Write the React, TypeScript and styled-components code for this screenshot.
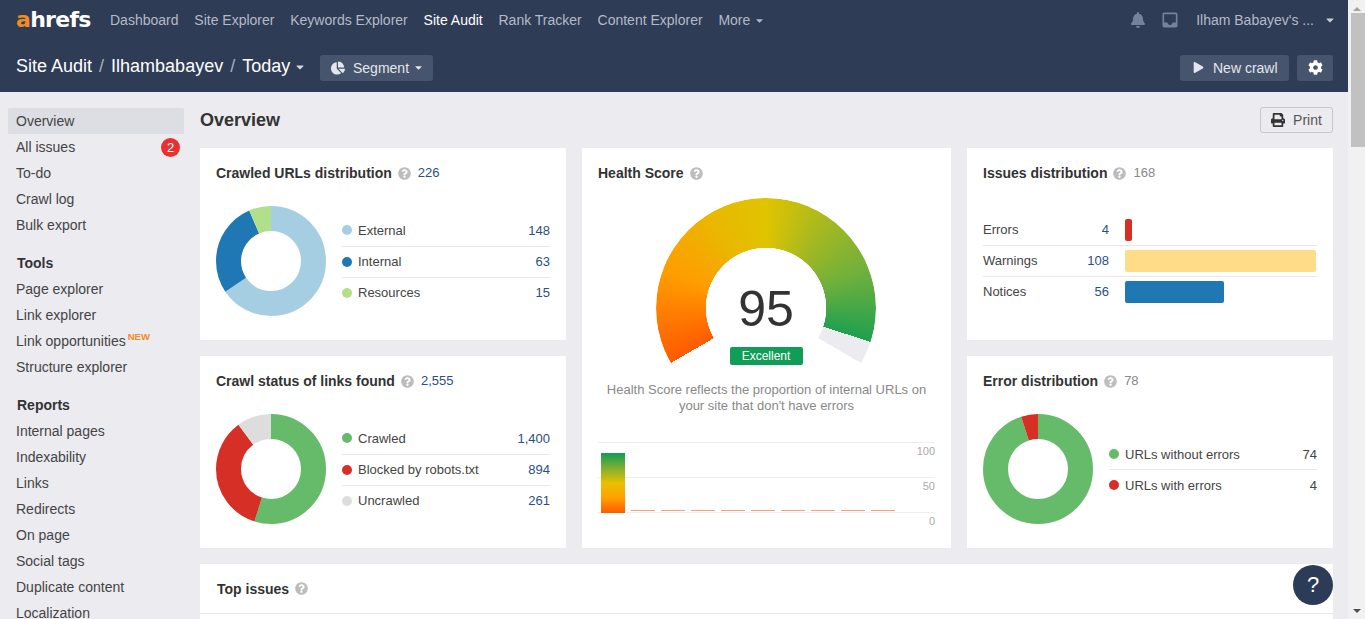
import * as React from 'react';
import styled, { createGlobalStyle } from 'styled-components';
import { FaBell, FaCaretDown, FaChartPie, FaCog, FaPlay, FaPrint, FaQuestionCircle } from 'react-icons/fa';
import { MdInbox } from 'react-icons/md';

const GlobalStyle = createGlobalStyle`
    html, body {
        margin: 0;
        height: 100%;
        overflow: hidden;
    }
    body {
        font-family: "Liberation Sans", Arial, sans-serif;
        font-size: 14px;
        color: #333;
        background: #ebebf0;
    }
`;

const navItems = ['Dashboard', 'Site Explorer', 'Keywords Explorer', 'Site Audit', 'Rank Tracker', 'Content Explorer'];

const sideTop = ['Overview', 'All issues', 'To-do', 'Crawl log', 'Bulk export'];
const sideTools = ['Page explorer', 'Link explorer', 'Link opportunities', 'Structure explorer'];
const sideReports = ['Internal pages', 'Indexability', 'Links', 'Redirects', 'On page', 'Social tags', 'Duplicate content', 'Localization'];

const urlsData = [
    { label: 'External', value: 148, display: '148', color: '#a6cee3' },
    { label: 'Internal', value: 63, display: '63', color: '#1f78b4' },
    { label: 'Resources', value: 15, display: '15', color: '#b2df8a' },
];
const crawlData = [
    { label: 'Crawled', value: 1400, display: '1,400', color: '#66bb6a' },
    { label: 'Blocked by robots.txt', value: 894, display: '894', color: '#d62f26' },
    { label: 'Uncrawled', value: 261, display: '261', color: '#dddddd' },
];
const errorData = [
    { label: 'URLs without errors', value: 74, display: '74', color: '#66bb6a' },
    { label: 'URLs with errors', value: 4, display: '4', color: '#d62f26' },
];
const issuesData = [
    { label: 'Errors', value: '4', width: 7, color: '#d62f26' },
    { label: 'Warnings', value: '108', width: 191, color: '#fedc88' },
    { label: 'Notices', value: '56', width: 99, color: '#1f78b4' },
];

const Donut: React.FC<{ data: { value: number; color: string }[] }> = ({ data }) => {
    const total = data.reduce((sum, d) => sum + d.value, 0);
    const r = 42.5;
    const circumference = 2 * Math.PI * r;
    let offset = 0;
    return (
        <DonutSvg viewBox="0 0 110 110">
            {data.map((d) => {
                const len = (d.value / total) * circumference;
                const circle = (
                    <circle
                        key={d.color}
                        cx="55"
                        cy="55"
                        r={r}
                        fill="none"
                        stroke={d.color}
                        strokeWidth="25"
                        strokeDasharray={`${len} ${circumference - len}`}
                        strokeDashoffset={-offset}
                        transform="rotate(-90 55 55)"
                    />
                );
                offset += len;
                return circle;
            })}
        </DonutSvg>
    );
};

const Help = () => (
    <HelpIcon>
        <FaQuestionCircle />
    </HelpIcon>
);

const App = () => (
    <Page>
        <GlobalStyle />
        <Viewport>
            <Header>
                <NavRow>
                    <Logo><LogoA>a</LogoA>hrefs</Logo>
                    <Nav>
                        {navItems.map((item) => (
                            <NavLink key={item} $active={item === 'Site Audit'}>{item}</NavLink>
                        ))}
                        <NavLink>More <FaCaretDown size={11} /></NavLink>
                    </Nav>
                    <UserArea>
                        <FaBell size={16} />
                        <MdInbox size={20} />
                        <UserName>Ilham Babayev's ...</UserName>
                        <UserCaret><FaCaretDown size={12} /></UserCaret>
                    </UserArea>
                </NavRow>
                <SubRow>
                    <Crumbs>
                        <span>Site Audit</span>
                        <CrumbSep>/</CrumbSep>
                        <span>Ilhambabayev</span>
                        <CrumbSep>/</CrumbSep>
                        <span>Today</span>
                        <CrumbCaret><FaCaretDown size={12} /></CrumbCaret>
                    </Crumbs>
                    <HeaderButton>
                        <FaChartPie size={14} /> Segment <FaCaretDown size={11} />
                    </HeaderButton>
                    <SubRight>
                        <HeaderButton $wide>
                            <FaPlay size={11} /> New crawl
                        </HeaderButton>
                        <GearButton><FaCog size={15} /></GearButton>
                    </SubRight>
                </SubRow>
            </Header>
            <Body>
                <Sidebar>
                    {sideTop.map((item) => (
                        <SideItem key={item} $active={item === 'Overview'}>
                            {item}
                            {item === 'All issues' && <Badge>2</Badge>}
                        </SideItem>
                    ))}
                    <SideHeading>Tools</SideHeading>
                    {sideTools.map((item) => (
                        <SideItem key={item}>
                            {item}
                            {item === 'Link opportunities' && <NewTag>NEW</NewTag>}
                        </SideItem>
                    ))}
                    <SideHeading>Reports</SideHeading>
                    {sideReports.map((item) => (
                        <SideItem key={item}>{item}</SideItem>
                    ))}
                </Sidebar>
                <Main>
                    <TitleRow>
                        <PageTitle>Overview</PageTitle>
                        <PrintButton><FaPrint size={14} /> Print</PrintButton>
                    </TitleRow>
                    <Grid>
                        <Card>
                            <CardTitle>Crawled URLs distribution <Help /> <TitleCount>226</TitleCount></CardTitle>
                            <DonutRow>
                                <Donut data={urlsData} />
                                <Legend>
                                    {urlsData.map((d) => (
                                        <LegendRow key={d.label}>
                                            <Dot $color={d.color} />
                                            <LegendLabel>{d.label}</LegendLabel>
                                            <Count>{d.display}</Count>
                                        </LegendRow>
                                    ))}
                                </Legend>
                            </DonutRow>
                        </Card>
                        <HealthCard>
                            <CardTitle>Health Score <Help /></CardTitle>
                            <Gauge>
                                <GaugeArc />
                                <GaugeValue>95</GaugeValue>
                                <GaugeTag>Excellent</GaugeTag>
                            </Gauge>
                            <HealthText>
                                Health Score reflects the proportion of internal URLs on your site that don't have errors
                            </HealthText>
                            <Chart>
                                <ChartLine>100</ChartLine>
                                <ChartLine>50</ChartLine>
                                <ChartBase>0</ChartBase>
                                <ChartBars>
                                    <ScoreBar />
                                    {Array.from({ length: 9 }).map((_, i) => (
                                        <EmptyBar key={i} />
                                    ))}
                                </ChartBars>
                            </Chart>
                        </HealthCard>
                        <Card>
                            <CardTitle>Issues distribution <Help /> <GreyCount>168</GreyCount></CardTitle>
                            <Issues>
                                {issuesData.map((d) => (
                                    <IssueRow key={d.label}>
                                        <IssueLabel>{d.label}</IssueLabel>
                                        <IssueValue>{d.value}</IssueValue>
                                        <IssueBar $color={d.color} $width={d.width} />
                                    </IssueRow>
                                ))}
                            </Issues>
                        </Card>
                        <Card>
                            <CardTitle>Crawl status of links found <Help /> <TitleCount>2,555</TitleCount></CardTitle>
                            <DonutRow>
                                <Donut data={crawlData} />
                                <Legend>
                                    {crawlData.map((d) => (
                                        <LegendRow key={d.label}>
                                            <Dot $color={d.color} />
                                            <LegendLabel>{d.label}</LegendLabel>
                                            <Count>{d.display}</Count>
                                        </LegendRow>
                                    ))}
                                </Legend>
                            </DonutRow>
                        </Card>
                        <Card>
                            <CardTitle>Error distribution <Help /> <GreyCount>78</GreyCount></CardTitle>
                            <DonutRow>
                                <Donut data={errorData} />
                                <Legend>
                                    {errorData.map((d) => (
                                        <LegendRow key={d.label}>
                                            <Dot $color={d.color} />
                                            <LegendLabel>{d.label}</LegendLabel>
                                            <DarkCount>{d.display}</DarkCount>
                                        </LegendRow>
                                    ))}
                                </Legend>
                            </DonutRow>
                        </Card>
                    </Grid>
                    <TopIssues>
                        <TopIssuesHead>Top issues <Help /></TopIssuesHead>
                    </TopIssues>
                </Main>
            </Body>
            <HelpButton>?</HelpButton>
        </Viewport>
        <Scrollbar>
            <ScrollArrow $up />
            <ScrollTrack><ScrollThumb /></ScrollTrack>
            <ScrollArrow />
        </Scrollbar>
    </Page>
);

export default App;

const Page = styled.div`
    display: flex;
    height: 100vh;
    overflow: hidden;
`;

const Viewport = styled.div`
    flex: 1;
    min-width: 0;
    position: relative;
    overflow: hidden;
`;

const Header = styled.header`
    height: 92px;
    background: #2e3c56;
    padding: 0 15px 0 16px;
    box-sizing: border-box;
`;

const NavRow = styled.div`
    display: flex;
    align-items: center;
    height: 40px;
`;

const Logo = styled.div`
    width: 94px;
    font-family: "DejaVu Sans", sans-serif;
    font-weight: 700;
    font-size: 22px;
    letter-spacing: -0.7px;
    color: #fff;
    line-height: 40px;
`;

const LogoA = styled.span`
    color: #f58a1f;
`;

const Nav = styled.nav`
    display: flex;
    gap: 15.8px;
`;

const NavLink = styled.a<{ $active?: boolean }>`
    color: ${(p) => (p.$active ? '#fff' : '#b4bac6')};
    white-space: nowrap;
    display: inline-flex;
    align-items: center;
    gap: 4px;
`;

const UserArea = styled.div`
    margin-left: auto;
    display: flex;
    align-items: center;
    color: #76829a;
    gap: 14px;
    margin-right: -3px;
`;

const UserName = styled.span`
    color: #b4bac6;
    margin-left: 2px;
    margin-right: -4px;
`;

const UserCaret = styled.span`
    display: inline-flex;
    color: #c9cdd6;
`;

const SubRow = styled.div`
    display: flex;
    align-items: center;
    height: 52px;
    padding-top: 1px;
    box-sizing: border-box;
`;

const Crumbs = styled.div`
    display: flex;
    align-items: center;
    color: #fff;
    font-size: 18px;
    width: 304px;
    white-space: nowrap;
`;

const CrumbSep = styled.span`
    color: #a9b0bd;
    margin: 0 7px;
`;

const CrumbCaret = styled.span`
    display: inline-flex;
    margin-left: 4px;
    color: #d5d8de;
`;

const HeaderButton = styled.button<{ $wide?: boolean }>`
    margin-top: 2px;
    height: 26px;
    width: ${(p) => (p.$wide ? '109px' : '113px')};
    padding: 0 0 0 ${(p) => (p.$wide ? '13px' : '11px')};
    border: 0;
    border-radius: 3px;
    background: #47546e;
    color: #e4e6eb;
    font: inherit;
    display: flex;
    align-items: center;
    gap: ${(p) => (p.$wide ? '9px' : '8px')};
    svg:last-child:not(:first-child) {
        margin-left: -4px;
    }
`;

const SubRight = styled.div`
    margin-left: auto;
    display: flex;
    gap: 8px;
`;

const GearButton = styled.button`
    margin-top: 2px;
    width: 36px;
    height: 26px;
    border: 0;
    border-radius: 3px;
    background: #47546e;
    color: #fff;
    display: flex;
    align-items: center;
    justify-content: center;
`;

const Body = styled.div`
    display: flex;
    padding: 16px 15px 0 8px;
    gap: 16px;
`;

const Sidebar = styled.aside`
    width: 176px;
    flex-shrink: 0;
`;

const SideItem = styled.div<{ $active?: boolean }>`
    height: 26px;
    line-height: 26px;
    padding: 0 4px 0 8px;
    border-radius: 2px;
    display: flex;
    align-items: center;
    color: #444;
    background: ${(p) => (p.$active ? '#dcdee3' : 'transparent')};
`;

const Badge = styled.span`
    margin-left: auto;
    width: 19px;
    height: 19px;
    border-radius: 50%;
    background: #e8312f;
    color: #fff;
    font-size: 13px;
    text-align: center;
    line-height: 19px;
`;

const NewTag = styled.sup`
    align-self: flex-start;
    color: #f58a1f;
    font-size: 9.5px;
    font-weight: 700;
    line-height: 9px;
    margin: 4px 0 0 2px;
`;

const SideHeading = styled.div`
    height: 26px;
    line-height: 26px;
    margin-top: 12px;
    padding-left: 9px;
    font-weight: 700;
    color: #333;
`;

const Main = styled.main`
    flex: 1;
    min-width: 0;
`;

const TitleRow = styled.div`
    display: flex;
    align-items: center;
    justify-content: space-between;
    height: 26px;
    margin-bottom: 15px;
    margin-top: -1px;
`;

const PageTitle = styled.h1`
    margin: 0;
    font-size: 18px;
    color: #333;
`;

const PrintButton = styled.button`
    width: 73px;
    height: 26px;
    border: 1px solid #c6c8cd;
    border-radius: 3px;
    background: transparent;
    color: #555;
    font: inherit;
    display: flex;
    align-items: center;
    justify-content: center;
    gap: 8px;
    svg {
        color: #333;
    }
`;

const Grid = styled.div`
    display: grid;
    grid-template-columns: 366px 369px 366px;
    grid-template-rows: 192px 192px;
    gap: 16px;
`;

const Card = styled.section`
    background: #fff;
    padding: 16px;
    box-sizing: border-box;
`;

const HealthCard = styled(Card)`
    grid-row: 1 / span 2;
    grid-column: 2;
`;

const CardTitle = styled.h2`
    margin: 0;
    font-size: 14px;
    line-height: 18px;
    font-weight: 700;
    color: #333;
    display: flex;
    align-items: center;
    gap: 6px;
`;

const HelpIcon = styled.span`
    display: inline-flex;
    color: #bdbdbd;
    font-size: 13px;
`;

const Count = styled.span`
    font-weight: 400;
    font-size: 13px;
    color: #2a5082;
`;

const TitleCount = styled(Count)`
    margin-left: 1px;
`;

const GreyCount = styled.span`
    font-weight: 400;
    font-size: 13px;
    color: #888;
    margin-left: 1px;
`;

const DarkCount = styled.span`
    font-size: 13px;
    color: #444;
`;

const DonutRow = styled.div`
    display: flex;
    align-items: center;
    gap: 16px;
    margin-top: 24px;
    height: 110px;
`;

const DonutSvg = styled.svg`
    width: 110px;
    height: 110px;
    flex-shrink: 0;
`;

const Legend = styled.div`
    flex: 1;
`;

const LegendRow = styled.div`
    display: flex;
    align-items: center;
    height: 31px;
    box-sizing: border-box;
    & + & {
        border-top: 1px solid #e8e8e8;
    }
    &:first-child:nth-last-child(2) {
        padding-top: 1px;
    }
`;

const Dot = styled.span<{ $color: string }>`
    width: 10px;
    height: 10px;
    border-radius: 50%;
    background: ${(p) => p.$color};
    margin-right: 6px;
`;

const LegendLabel = styled.span`
    flex: 1;
    font-size: 13px;
    color: #444;
`;

const Issues = styled.div`
    margin-top: 33px;
`;

const IssueRow = styled.div`
    display: flex;
    align-items: center;
    height: 31px;
    box-sizing: border-box;
    border-bottom: 1px solid #e8e8e8;
    &:last-child {
        border-bottom-color: transparent;
    }
`;

const IssueLabel = styled.span`
    width: 70px;
    margin-top: -2px;
    font-size: 13px;
    color: #444;
`;

const IssueValue = styled.span`
    width: 56px;
    margin: -2px 16px 0 0;
    text-align: right;
    font-size: 13px;
    color: #2a5082;
`;

const IssueBar = styled.span<{ $color: string; $width: number }>`
    width: ${(p) => p.$width}px;
    height: 22px;
    border-radius: 2px;
    background: ${(p) => p.$color};
`;

const Gauge = styled.div`
    position: relative;
    width: 220px;
    height: 172px;
    margin: 16px auto 0;
    left: -1px;
`;

const GaugeArc = styled.div`
    width: 220px;
    height: 220px;
    border-radius: 50%;
    background: conic-gradient(
        from -120deg,
        #ff5a00 0deg,
        #ff9d00 50deg,
        #e9b800 90deg,
        #e0c400 120deg,
        #a6b820 155deg,
        #6fb03c 190deg,
        #1fa050 228deg,
        #ebebf0 228deg,
        #ebebf0 240deg,
        transparent 240deg
    );
    -webkit-mask: radial-gradient(circle, transparent 60px, #000 60.5px);
    mask: radial-gradient(circle, transparent 60px, #000 60.5px);
`;

const GaugeValue = styled.div`
    position: absolute;
    top: 81px;
    left: 1px;
    right: 0;
    text-align: center;
    font-size: 50px;
    line-height: 60px;
    color: #333;
`;

const GaugeTag = styled.div`
    position: absolute;
    top: 149px;
    left: 74px;
    width: 73px;
    height: 18px;
    line-height: 18px;
    text-align: center;
    border-radius: 2px;
    background: #0f9d58;
    color: #fff;
    font-size: 12px;
`;

const HealthText = styled.p`
    margin: 12px 0 0;
    padding: 0 8px;
    text-align: center;
    font-size: 13px;
    line-height: 16px;
    color: #888;
`;

const Chart = styled.div`
    position: relative;
    margin-top: 28px;
`;

const ChartLine = styled.div`
    height: 35px;
    box-sizing: border-box;
    border-top: 1px solid #eeeeee;
    font-size: 11px;
    line-height: 15px;
    color: #aaa;
    text-align: right;
    padding-top: 1px;
`;

const ChartBase = styled(ChartLine)`
    height: 16px;
`;

const ChartBars = styled.div`
    position: absolute;
    left: 3px;
    top: 11px;
    height: 60px;
    display: flex;
    align-items: flex-end;
    gap: 6px;
`;

const ScoreBar = styled.div`
    width: 24px;
    height: 60px;
    background: linear-gradient(to bottom, #0f9d58 0%, #8db02c 28%, #e9c000 50%, #ffa000 75%, #ff5a00 100%);
`;

const EmptyBar = styled.div`
    width: 24px;
    height: 1px;
    margin-bottom: 2px;
    background: #f0a07a;
`;

const TopIssues = styled.section`
    margin-top: 16px;
    background: #fff;
    height: 200px;
`;

const TopIssuesHead = styled.div`
    height: 50px;
    box-sizing: border-box;
    padding: 0 17px;
    display: flex;
    align-items: center;
    gap: 6px;
    font-weight: 700;
    color: #333;
    border-bottom: 1px solid #e8e8e8;
`;

const HelpButton = styled.div`
    position: absolute;
    right: 15px;
    bottom: 14px;
    width: 40px;
    height: 40px;
    border-radius: 50%;
    background: #2b3b58;
    color: #fff;
    font-size: 22px;
    line-height: 40px;
    text-align: center;
`;

const Scrollbar = styled.div`
    width: 17px;
    flex-shrink: 0;
    display: flex;
    flex-direction: column;
    background: #f1f1f1;
`;

const ScrollArrow = styled.div<{ $up?: boolean }>`
    height: 17px;
    display: flex;
    align-items: center;
    justify-content: center;
    &::before {
        content: '';
        border-left: 4px solid transparent;
        border-right: 4px solid transparent;
        ${(p) => (p.$up ? 'border-bottom: 4px solid #a3a3a3;' : 'border-top: 4px solid #505050;')}
    }
`;

const ScrollTrack = styled.div`
    flex: 1;
`;

const ScrollThumb = styled.div`
    height: 134px;
    margin: -4px 0 0 3px;
    width: 14px;
    background: #c1c1c1;
`;
